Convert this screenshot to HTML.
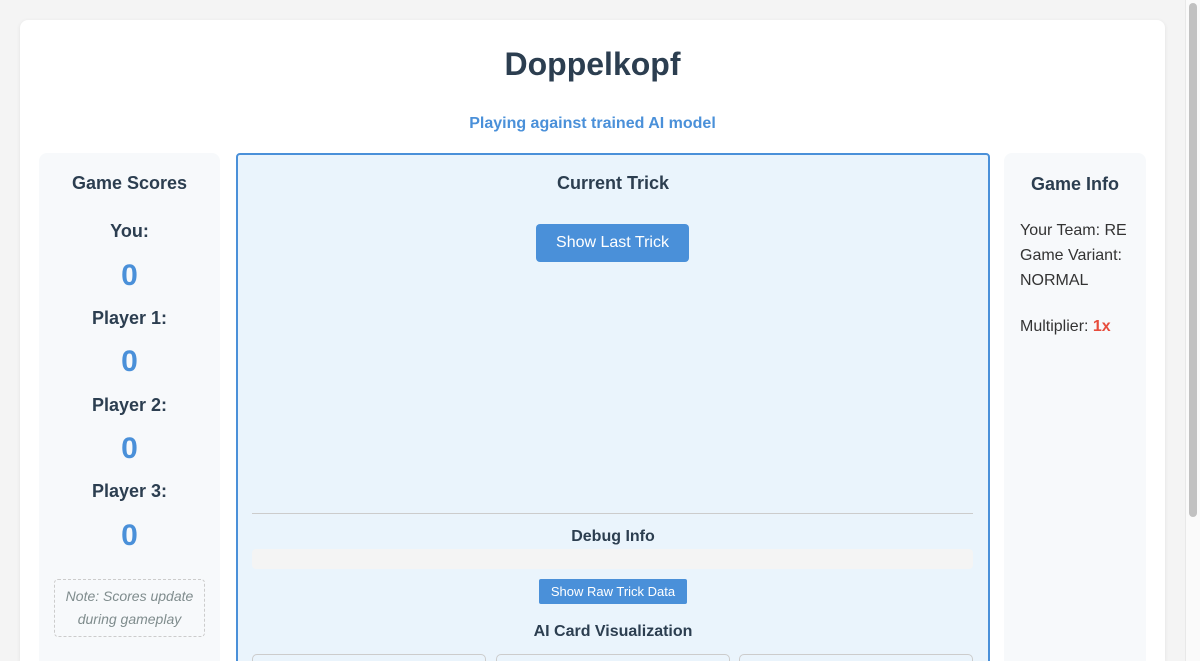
<!DOCTYPE html>
<html><head><style>
*{box-sizing:border-box;margin:0;padding:0}
html,body{width:1200px;height:661px;overflow:hidden}
body{background:#f4f4f4;font-family:"Liberation Sans",Arial,sans-serif;color:#2c3e50;position:relative}
.sb{position:absolute;left:1185px;top:0;width:15px;height:661px;background:#fafafa;border-left:1px solid #e8e8e8}
.th{position:absolute;left:1189px;top:3px;width:8px;height:514px;background:#c1c1c1;border-radius:4px}
.card{position:absolute;left:20px;top:20px;width:1145px;height:641px;background:#fff;border-radius:8px 8px 0 0;box-shadow:0 1px 4px rgba(0,0,0,.08)}
h1{position:absolute;left:0;width:1185px;top:46px;text-align:center;font-size:32px;font-weight:bold;color:#2c3e50}
.sub{position:absolute;left:0;width:1185px;top:115px;text-align:center;font-size:16px;font-weight:bold;color:#4a90d9}
.lp{position:absolute;left:39px;top:153px;width:181px;height:508px;background:#f7f9fb;border-radius:8px 8px 0 0;text-align:center}
.lp h3{font-size:18px;margin-top:20px}
.pl{font-size:18px;font-weight:bold;position:absolute;width:100%}
.sc{font-size:30px;font-weight:bold;color:#4a90d9;position:absolute;width:100%}
.note{position:absolute;left:15px;top:426px;width:151px;height:58px;border:1px dashed #ccc;border-radius:4px;font-style:italic;color:#7f8c8d;font-size:14px;line-height:23px;padding-top:5px}
.cp{position:absolute;left:236px;top:153px;width:754px;height:520px;background:#eaf4fc;border:2px solid #4a90d9;border-radius:4px;text-align:center}
.cp h3{font-size:18px;margin-top:18px}
.btn{position:absolute;left:298px;top:69px;width:153px;height:38px;background:#4a90d9;color:#fff;border-radius:4px;font-size:16px;line-height:38px}
.hr{position:absolute;left:14px;top:358px;width:721px;height:1px;background:#ccc}
.dbg{position:absolute;left:0;width:100%;top:373px;font-size:16px;font-weight:bold}
.dbox{position:absolute;left:14px;top:394px;width:721px;height:20px;background:#f4f4f4;border-radius:4px}
.b2{position:absolute;left:301px;top:424px;width:148px;height:25px;background:#4a90d9;color:#fff;border-radius:2px;font-size:13px;line-height:25px}
.ai{position:absolute;left:0;width:100%;top:468px;font-size:16px;font-weight:bold}
.vc{position:absolute;top:499px;width:234px;height:30px;background:#eaf4fc;border:1px solid #ccc;border-radius:5px}
.rp{position:absolute;left:1004px;top:153px;width:142px;height:508px;background:#f7f9fb;border-radius:8px 8px 0 0;padding-left:16px;font-size:16px;line-height:25px;color:#333}
.rp h3{font-size:18px;text-align:center;margin:20px 0 23px -16px;color:#2c3e50;line-height:22px}
</style></head><body>
<div class="card"></div>
<h1>Doppelkopf</h1>
<div class="sub">Playing against trained AI model</div>
<div class="lp"><h3>Game Scores</h3>
<div class="pl" style="top:68px">You:</div><div class="sc" style="top:106px">0</div>
<div class="pl" style="top:155px">Player 1:</div><div class="sc" style="top:192px">0</div>
<div class="pl" style="top:242px">Player 2:</div><div class="sc" style="top:279px">0</div>
<div class="pl" style="top:328px">Player 3:</div><div class="sc" style="top:366px">0</div>
<div class="note">Note: Scores update during gameplay</div></div>
<div class="cp"><h3>Current Trick</h3><div class="btn">Show Last Trick</div>
<div class="hr"></div><div class="dbg">Debug Info</div><div class="dbox"></div>
<div class="b2">Show Raw Trick Data</div><div class="ai">AI Card Visualization</div>
<div class="vc" style="left:14px"></div><div class="vc" style="left:258px"></div><div class="vc" style="left:501px"></div></div>
<div class="rp"><h3>Game Info</h3>Your Team: RE<br>Game Variant:<br>NORMAL<br><div style="height:21px"></div>Multiplier: <b style="color:#e74c3c">1x</b></div>
<div class="sb"></div><div class="th"></div>
</body></html>
